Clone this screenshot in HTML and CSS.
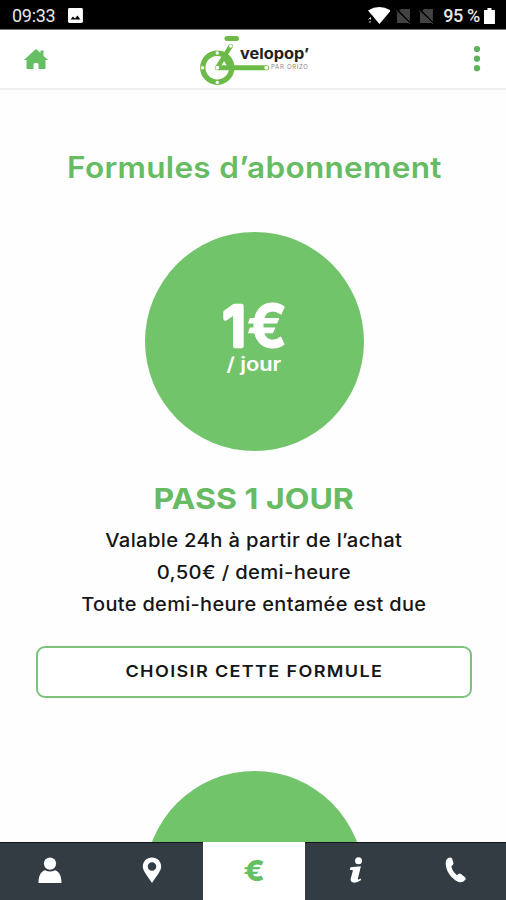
FILE: index.html
```html
<!DOCTYPE html>
<html lang="fr">
<head>
<meta charset="utf-8">
<title>velopop’</title>
<link rel="stylesheet" href="styles.css">
</head>
<body>
<div class="screen">
  <div class="status">
    <span class="clock">09:33</span>
    <svg class="photo" width="15" height="15" viewBox="0 0 15 15"><rect width="15" height="15" rx="1.5" fill="#fff"/><path d="M2.500 11.500 5 8.500l2 2 2.500-3 3 4z" fill="#000"/></svg>
    <svg class="wifi" width="23" height="17" viewBox="0 0 23 17"><path d="M0 3.500Q11.500-3.500 23 3.500L11.500 17z" fill="#fff"/><path d="M0 8h4l3 6v3H0z" fill="#000"/><path d="M.5 12.500 2.500 10.500v2M1 15h2" stroke="#ddd" fill="none"/></svg>
    <svg class="sim" width="15" height="16" viewBox="0 0 15 16"><path d="M5 1h9v14H1V5z" fill="#424242"/><path d="M0 1 15 16" stroke="#000" stroke-width="2"/><path d="M0 2.500 14 16" stroke="#505050"/></svg>
    <svg class="sim sim2" width="15" height="16" viewBox="0 0 15 16"><path d="M5 1h9v14H1V5z" fill="#424242"/><path d="M0 1 15 16" stroke="#000" stroke-width="2"/><path d="M0 2.500 14 16" stroke="#505050"/></svg>
    <span class="level">95 %</span>
    <svg class="battery" width="11" height="16" viewBox="0 0 11 16"><path d="M3.500 0h4v2H11v14H0V2h3.500z" fill="#fff"/></svg>
  </div>
  <header class="bar">
    <svg class="home" width="26" height="22" viewBox="0 0 26 22"><path d="M13 1 .8 12h2.700v8.300q0 .7.700.700h6.300v-4.500q0-1.500 1.500-1.500h2q1.500 0 1.500 1.500V21h6.300q.7 0 .7-.7V12h2.700L20.500 8V2.500h-3v2.600z" fill="#66bf63"/></svg>
    <div class="logo">
      <svg width="70" height="50" viewBox="0 0 70 50">
        <g fill="none" stroke="#6cba48" stroke-linecap="round">
          <circle cx="18.300" cy="33.700" r="14.500" stroke-width="5.400"/>
          <path d="M28 4.600h9.500" stroke-width="5"/>
          <path d="M31.700 12 18.300 33.700" stroke-width="4.500"/>
          <path d="M24.500 22 32 33.700" stroke-width="4.500"/>
          <path d="M18.300 33.700h49.500" stroke-width="5"/>
        </g>
        <g fill="#fff"><circle cx="18.300" cy="33.700" r="2"/><circle cx="31.700" cy="12" r="1.700"/><circle cx="67.300" cy="33.700" r="2"/><circle cx="3.600" cy="33.700" r="1.700"/><circle cx="18.300" cy="19" r="1.700"/><circle cx="18.300" cy="48.400" r="1.700"/></g>
      </svg>
      <div class="names"><span class="brand">velopop’</span><span class="owner">PAR ORIZO</span></div>
    </div>
    <svg class="dots" width="8" height="28" viewBox="0 0 8 28" fill="#5bb35b"><circle cx="4" cy="4" r="3.100"/><circle cx="4" cy="13.700" r="3.100"/><circle cx="4" cy="23.200" r="3.100"/></svg>
  </header>
  <main>
    <h1><span>Formules d’abonnement</span></h1>
    <div class="disc">
      <svg class="price" width="80" height="52" viewBox="0 0 80 52"><text x="7" y="46"><tspan class="one">1</tspan><tspan class="euro" x="31" y="47">€</tspan></text></svg>
      <span class="per">/ jour</span>
    </div>
    <h2><span>PASS 1 JOUR</span></h2>
    <p><span>Valable 24h à partir de l’achat</span></p>
    <p><span>0,50€ / demi-heure</span></p>
    <p><span class="tight">Toute demi-heure entamée est due</span></p>
    <button><span>CHOISIR CETTE FORMULE</span></button>
    <div class="disc next"></div>
  </main>
  <nav>
    <a><svg width="24" height="26" viewBox="0 0 24 26" fill="#fff"><circle cx="12" cy="6.600" r="6.100"/><path d="M.5 26C.5 18.500 3 14.500 7 13.300q5 2.600 10 0c4 1.200 6.500 5.200 6.500 12.700z"/></svg></a>
    <a><svg width="20" height="26" viewBox="0 0 20 26"><path fill="#fff" fill-rule="evenodd" d="M10 .5C4.800.5.800 4.400.8 9.500.8 14 5 18 10 26c5-8 9.200-12 9.200-16.500C19.200 4.400 15.200.5 10 .5zm0 4.700a4.300 4.300 0 1 1 0 8.600 4.300 4.300 0 0 1 0-8.600z"/></svg></a>
    <a class="on"><span>€</span></a>
    <a><svg width="16" height="26" viewBox="0 0 16 26" fill="#fff"><circle cx="10.500" cy="3.800" r="3.500"/><path d="M2.500 10.200 12.900 9.300 9.900 21.500q-.3 1.300.8.900l2-1 .4 1.600Q9 26 5.500 25.600 1.800 25 2.800 21.300l2-7.200q.3-1.200-.8-1.200l-2.200.1z"/></svg></a>
    <a><svg width="22" height="26" viewBox="0 0 22 26" fill="#fff"><path d="M2.300 1.800Q5-.3 7 1.200l1.500 5Q8.500 8.500 6.300 9q1 5.500 5.700 9.300 2.200-2.500 4-1.300l4 3.300q1.400 1.300 0 2.800-2.600 3.300-6.500 1.800C5.500 21.500.3 13 .7 5.500q.2-2.500 1.600-3.700z"/></svg></a>
  </nav>
</div>
</body>
</html>
```
FILE: styles.css
```css
* { box-sizing: border-box; }
body { margin: 0; font-family: Inter, "Liberation Sans", sans-serif; background: #fefefe; }
.screen { display: flex; flex-direction: column; width: 506px; height: 900px; overflow: hidden; }
.status { flex: none; height: 30px; background: #000; color: #e8e8e8; display: flex; align-items: center; padding: 2px 11px 0 12px; border-bottom: 1px solid #777; font: 500 18px/28px Roboto, sans-serif; }
.clock { width: 56px; font-weight: 400; letter-spacing: -.3px; }
.wifi { margin-left: 285px; }
.sim { margin-left: 6px; }
.sim2 { margin-left: 8px; }
.level { margin-left: 9px; width: 38px; white-space: nowrap; letter-spacing: -.4px; }
.battery { margin-left: 3px; margin-top: 1px; }
.bar { flex: none; height: 60px; background: #fff; border-bottom: 2px solid #efefef; display: flex; align-items: center; padding: 0 25px 0 23px; }
.home { margin-top: -1px; }
.logo { display: flex; width: 120px; margin-left: 150px; height: 50px; }
.logo svg { flex: none; overflow: visible; }
.names { display: flex; flex-direction: column; margin-left: -29px; padding-top: 10px; white-space: nowrap; }
.brand { align-self: flex-start; font-size: 15px; font-weight: 700; line-height: 19px; color: #222; transform: scaleX(1.09); transform-origin: 0 50%; }
.owner { font-size: 6px; line-height: 8px; color: #888; padding-left: 31px; letter-spacing: .7px; }
.dots { margin-left: auto; }
main { flex: 1; min-height: 0; overflow: hidden; display: flex; flex-direction: column; align-items: center; }
h1, h2, p { margin: 0; text-align: center; white-space: nowrap; padding-left: 2px; }
h1 span, h2 span, p span, button span, .per { display: inline-block; transform: scaleX(1.09); }
h1 { font-size: 29.500px; font-weight: 600; line-height: 40px; color: #66bb63; margin-top: 57px; letter-spacing: .3px; }
h1 span { transform: scaleX(1.068); }
.disc { flex: none; width: 219px; height: 219px; border-radius: 50%; background: #72c46b; margin: 45px 0 0 2px; color: #fff; display: flex; flex-direction: column; align-items: center; padding-top: 68px; }
.price { display: block; margin-left: 3px; overflow: visible; }
.price text { fill: #fff; stroke: #fff; stroke-linejoin: round; }
.one { font-size: 55px; font-weight: 500; stroke-width: 4.500px; }
.euro { font-size: 59px; font-weight: 700; stroke-width: 1px; }
.per { font-size: 19px; font-weight: 600; line-height: 24px; margin: 1px 0 0 -1px; transform: scaleX(1.15); }
h2 { font-size: 29px; font-weight: 700; line-height: 40px; color: #66bb63; margin-top: 28px; }
h2 span { transform: scaleX(1.105); }
p { font-size: 18.500px; font-weight: 500; line-height: 32px; color: #161616; letter-spacing: .3px; }
p span { transform: translateY(-1px) scaleX(1.094); }
p .tight { transform: translateY(-1px) scaleX(1.08); }
h2 + p { margin-top: 6px; }
button { flex: none; width: 436px; height: 52px; margin: 25px 0 0 2px; border: 2px solid #7dc27c; border-radius: 9px; background: #fff; padding: 0 0 3px; font: 600 16px Inter, sans-serif; letter-spacing: 1.200px; color: #161616; }
button span { transform: scaleX(1.127); }
.next { margin-top: 73px; }
nav { flex: none; height: 58px; display: grid; grid-template-columns: 101px 102px 102px 101px 100px; background: #333c43; border-top: 1px solid #0d1419; }
nav a { display: flex; justify-content: center; padding-top: 14px; }
nav a:first-child { padding-right: 2px; }
nav .on { background: #fff; margin-top: -1px; color: #66bf63; font: 800 29px/30px Inter, sans-serif; }
.on span { transform: scaleX(1.08); }
```
